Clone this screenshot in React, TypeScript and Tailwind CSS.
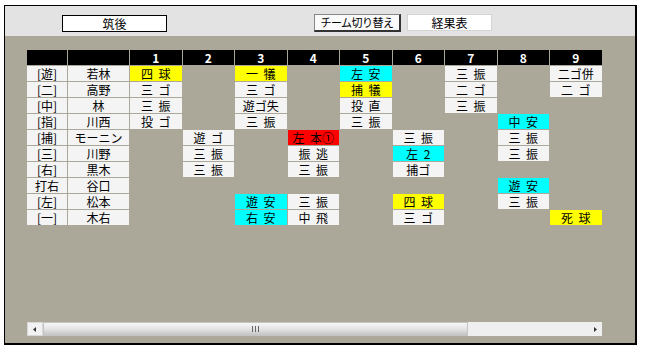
import React from "react";

type Hit = [string, string?];

const rows: { pos: string; name: string; res: Record<number, Hit> }[] = [
  { pos: "[遊]", name: "若林", res: { 1: ["四 球", "y"], 3: ["一 犠", "y"], 5: ["左 安", "c"], 7: ["三 振"], 9: ["二ゴ併"] } },
  { pos: "[二]", name: "高野", res: { 1: ["三 ゴ"], 3: ["三 ゴ"], 5: ["捕 犠", "y"], 7: ["二 ゴ"], 9: ["二 ゴ"] } },
  { pos: "[中]", name: "林", res: { 1: ["三 振"], 3: ["遊ゴ失"], 5: ["投 直"], 7: ["三 振"] } },
  { pos: "[指]", name: "川西", res: { 1: ["投 ゴ"], 3: ["三 振"], 5: ["三 振"], 8: ["中 安", "c"] } },
  { pos: "[捕]", name: "モーニン", res: { 2: ["遊 ゴ"], 4: ["左 本①", "r"], 6: ["三 振"], 8: ["三 振"] } },
  { pos: "[三]", name: "川野", res: { 2: ["三 振"], 4: ["振 逃"], 6: ["左 2", "c"], 8: ["三 振"] } },
  { pos: "[右]", name: "黒木", res: { 2: ["三 振"], 4: ["三 振"], 6: ["捕ゴ"] } },
  { pos: "打右", name: "谷口", res: { 8: ["遊 安", "c"] } },
  { pos: "[左]", name: "松本", res: { 3: ["遊 安", "c"], 4: ["三 振"], 6: ["四 球", "y"], 8: ["三 振"] } },
  { pos: "[一]", name: "木右", res: { 3: ["右 安", "c"], 4: ["中 飛"], 6: ["三 ゴ"], 9: ["死 球", "y"] } },
];

const bg = (c?: string) =>
  c === "y" ? "bg-[#ffff00]" : c === "c" ? "bg-[#00ffff]" : c === "r" ? "bg-[#ff0000]" : "bg-[#f4f4f4]";

const innings = [1, 2, 3, 4, 5, 6, 7, 8, 9];

export default function App() {
  return (
    <div
      className="w-[650px] h-[356px] bg-white pt-[5px] pl-[4px]"
      style={{ fontFamily: '"Noto Sans CJK JP", "Liberation Sans", sans-serif' }}
    >
      <div className="w-[633px] h-[340px] border-l border-t border-r-2 border-b-2 border-black flex flex-col">
        {/* top bar */}
        <div className="h-[30px] bg-[#e3e3e3] flex items-start pt-[9px] text-[12px] leading-[15px] text-black">
          <div className="ml-[57px] w-[105px] h-[17px] bg-white border border-black text-center">筑後</div>
          <div className="ml-[147px] w-[87px] h-[18px] -mt-px bg-[#fafafa] border border-t-[#888] border-l-[#888] border-r-2 border-b-2 border-r-[#333] border-b-[#333] text-center text-[11px] leading-[15px] tracking-[-0.5px]">
            チーム切り替え
          </div>
          <div className="ml-[6px] w-[85px] h-[17px] -mt-px bg-white border border-[#d4d4d4] text-center">経果表</div>
        </div>

        {/* scorebook */}
        <div className="flex-1 bg-[#aca899] pl-[22px] pt-[14px]">
          <div className="grid grid-cols-[40px_61px_repeat(9,51.5px)] auto-rows-[15px] gap-px text-[12px] leading-[15px] text-black text-center">
            <div className="bg-black" />
            <div className="bg-black" />
            {innings.map((i) => (
              <div key={i} className="bg-black text-white font-bold">
                {i}
              </div>
            ))}
            {rows.map((r) => (
              <React.Fragment key={r.name}>
                <div className="bg-[#f4f4f4]">{r.pos}</div>
                <div className="bg-[#f4f4f4]">{r.name}</div>
                {innings.map((i) => {
                  const h = r.res[i];
                  return (
                    <div key={i} className={h ? `${bg(h[1])} [word-spacing:3px]` : ""}>
                      {h ? h[0] : ""}
                    </div>
                  );
                })}
              </React.Fragment>
            ))}
          </div>

          {/* horizontal scrollbar */}
          <div className="mt-[97px] w-[575px] h-[14px] flex bg-[#efefef]">
            <div className="w-[16px] h-full bg-[#f2f2f2] border border-[#d8d8d8] flex items-center justify-center">
              <svg width="4" height="5" viewBox="0 0 4 5">
                <path d="M3 0 L0 2.5 L3 5 Z" fill="#333" />
              </svg>
            </div>
            <div className="w-[425px] h-full border border-[#c4c4c4] bg-gradient-to-b from-[#f6f6f6] via-[#e4e4e4] to-[#c4c4c4] flex items-center justify-center">
              <svg width="7" height="6" viewBox="0 0 7 6">
                <path d="M0.5 0 V6 M3.5 0 V6 M6.5 0 V6" stroke="#666" strokeWidth="1" />
              </svg>
            </div>
            <div className="flex-1" />
            <div className="w-[12px] h-full flex items-center justify-center">
              <svg width="4" height="5" viewBox="0 0 4 5">
                <path d="M0 0 L3 2.5 L0 5 Z" fill="#333" />
              </svg>
            </div>
          </div>
        </div>
      </div>
    </div>
  );
}
